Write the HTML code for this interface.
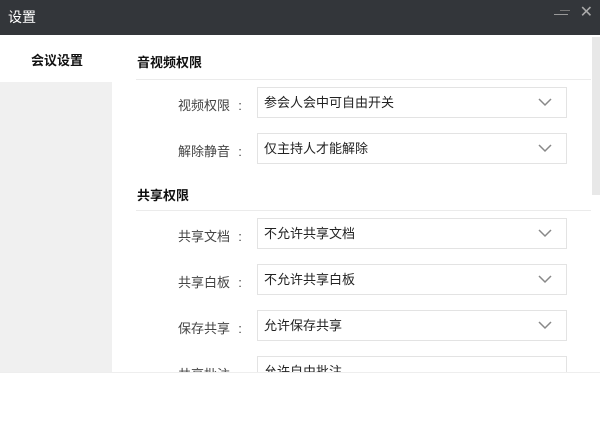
<!DOCTYPE html><html><head><meta charset="utf-8"><style>
*{margin:0;padding:0;box-sizing:border-box}
body{width:600px;height:426px;overflow:hidden;background:#fff;font-family:"Liberation Sans","Noto Sans CJK SC",sans-serif;position:relative;font-size:13px;color:#333}
.t{position:absolute;left:0;top:0;width:600px;height:35px;background:#33363a;color:#fff;font-size:14px;line-height:35px;padding-left:8px}
.side{position:absolute;left:0;top:82px;width:112px;height:290px;background:#f0f0f0}
.abs{position:absolute}
.h{position:absolute;left:137px;font-weight:bold;font-size:13px;color:#111}
.line{position:absolute;left:136px;width:455px;height:1px;background:#ebebeb}
.lab{position:absolute;left:140px;width:110px;text-align:right;color:#444}
.lab i{font-style:normal;display:inline-block;width:20px;text-align:center}
.sel{position:absolute;left:257px;width:310px;height:31px;border:1px solid #e3e3e3;padding-left:6px;line-height:29px;color:#222}
.sel svg{position:absolute;right:14px;top:10px}
.sb{position:absolute;left:592px;top:37px;width:8px;height:158px;background:#e8e8e8}
.bot{position:absolute;left:0;top:372px;width:600px;height:54px;background:#fff;border-top:1px solid #eee}
</style></head><body>
<div class="t">设置</div>
<div class="abs" style="right:30px;top:10px;width:10px;height:1px;background:#777"></div>
<div class="abs" style="right:32px;top:14px;width:14px;height:1px;background:#999"></div>
<div class="abs" style="right:7px;top:2px;color:#aaa;font-size:16px">✕</div>
<div class="abs" style="left:31px;top:50px;font-weight:bold;color:#111">会议设置</div>
<div class="side"></div>
<div class="sb"></div>
<div class="h" style="top:52px">音视频权限</div>
<div class="line" style="top:79px"></div>
<div class="lab" style="top:95px">视频权限<i>:</i></div>
<div class="sel" style="top:87px">参会人会中可自由开关<svg width="14" height="9"><path d="M1 1l6 6 6-6" stroke="#888" fill="none" stroke-width="1.5"/></svg></div>
<div class="lab" style="top:141px">解除静音<i>:</i></div>
<div class="sel" style="top:133px">仅主持人才能解除<svg width="14" height="9"><path d="M1 1l6 6 6-6" stroke="#888" fill="none" stroke-width="1.5"/></svg></div>
<div class="h" style="top:185px">共享权限</div>
<div class="line" style="top:210px"></div>
<div class="lab" style="top:226px">共享文档<i>:</i></div>
<div class="sel" style="top:218px">不允许共享文档<svg width="14" height="9"><path d="M1 1l6 6 6-6" stroke="#888" fill="none" stroke-width="1.5"/></svg></div>
<div class="lab" style="top:272px">共享白板<i>:</i></div>
<div class="sel" style="top:264px">不允许共享白板<svg width="14" height="9"><path d="M1 1l6 6 6-6" stroke="#888" fill="none" stroke-width="1.5"/></svg></div>
<div class="lab" style="top:318px">保存共享<i>:</i></div>
<div class="sel" style="top:310px">允许保存共享<svg width="14" height="9"><path d="M1 1l6 6 6-6" stroke="#888" fill="none" stroke-width="1.5"/></svg></div>
<div class="lab" style="top:364px">共享批注<i>:</i></div>
<div class="sel" style="top:356px">允许自由批注</div>
<div class="bot"></div>
</body></html>
